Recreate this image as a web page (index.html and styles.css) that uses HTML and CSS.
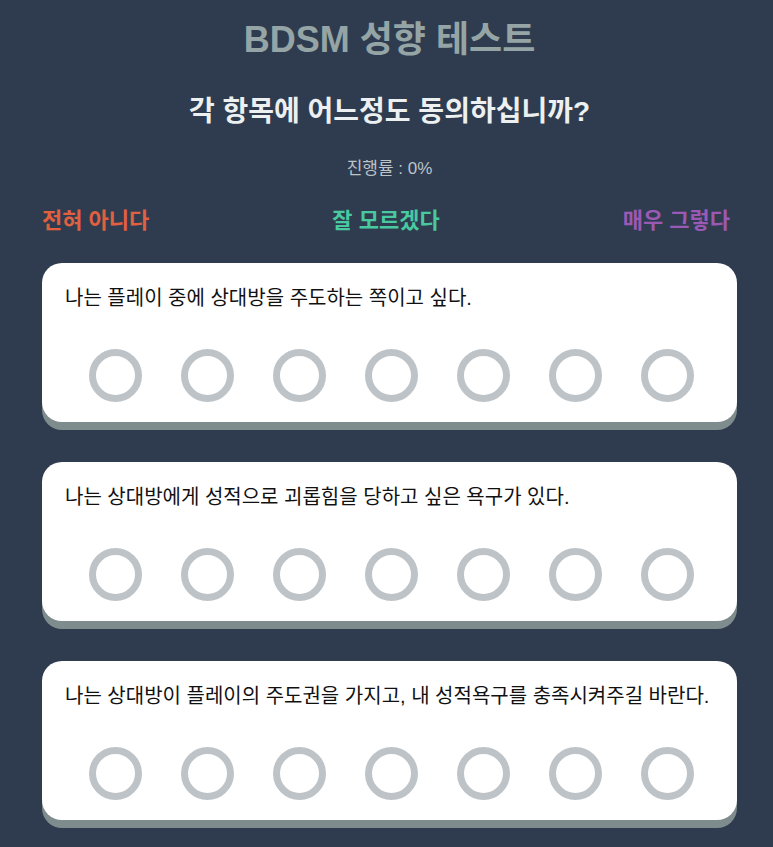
FILE: index.html
```html
<!DOCTYPE html>
<html lang="ko">
<head>
    <meta charset="UTF-8">
    <meta name="viewport" content="width=device-width, initial-scale=1.0">
    <title>BDSM 성향 테스트</title>
    <link rel="stylesheet" href="styles.css">
</head>
<body>
    <div class="container">
        <h1 class="title">BDSM 성향 테스트</h1>
        <h2 class="subtitle">각 항목에 어느정도 동의하십니까?</h2>
        <p class="progress">진행률 : 0%</p>

        <div class="scale-labels">
            <span class="label-no">전혀 아니다</span>
            <span class="label-mid">잘 모르겠다</span>
            <span class="label-yes">매우 그렇다</span>
        </div>

        <div class="question">
            <p class="question-text">나는 플레이 중에 상대방을 주도하는 쪽이고 싶다.</p>
            <div class="choices">
                <span class="choice"></span>
                <span class="choice"></span>
                <span class="choice"></span>
                <span class="choice"></span>
                <span class="choice"></span>
                <span class="choice"></span>
                <span class="choice"></span>
            </div>
        </div>

        <div class="question">
            <p class="question-text">나는 상대방에게 성적으로 괴롭힘을 당하고 싶은 욕구가 있다.</p>
            <div class="choices">
                <span class="choice"></span>
                <span class="choice"></span>
                <span class="choice"></span>
                <span class="choice"></span>
                <span class="choice"></span>
                <span class="choice"></span>
                <span class="choice"></span>
            </div>
        </div>

        <div class="question">
            <p class="question-text">나는 상대방이 플레이의 주도권을 가지고, 내 성적욕구를 충족시켜주길 바란다.</p>
            <div class="choices">
                <span class="choice"></span>
                <span class="choice"></span>
                <span class="choice"></span>
                <span class="choice"></span>
                <span class="choice"></span>
                <span class="choice"></span>
                <span class="choice"></span>
            </div>
        </div>
    </div>
</body>
</html>
```

FILE: styles.css
```css
* {
    margin: 0;
    padding: 0;
    box-sizing: border-box;
}

body {
    background: #2f3c4f;
    font-family: 'Liberation Sans', 'Noto Sans CJK KR', sans-serif;
    overflow: hidden;
}

.container {
    padding: 18px 36px 0 42px;
}

.title {
    text-align: center;
    font-size: 36px;
    line-height: 44px;
    font-weight: bold;
    color: #95a5a6;
}

.subtitle {
    margin-top: 32px;
    text-align: center;
    font-size: 28px;
    line-height: 36px;
    font-weight: bold;
    color: #ecf0f1;
}

.progress {
    margin-top: 27px;
    text-align: center;
    font-size: 17px;
    line-height: 24px;
    color: #bdc3c7;
}

/* 척도 라벨 */
.scale-labels {
    display: flex;
    justify-content: space-between;
    margin-top: 25px;
    padding-right: 7px;
    font-size: 22px;
    line-height: 30px;
    font-weight: bold;
}

.label-no {
    color: #e0603f;
}

.label-mid {
    color: #48c9a0;
}

.label-yes {
    color: #9b59b6;
}

/* 질문 카드 */
.question {
    margin-top: 27px;
    margin-bottom: 40px;
    background: #fff;
    border-radius: 20px;
    box-shadow: 0 8px 0 #7f8c8d;
    padding: 21px 23px 20px 23px;
}

.question + .question {
    margin-top: 0;
}

.question-text {
    font-size: 20px;
    line-height: 28px;
    color: #111;
}

.choices {
    display: flex;
    justify-content: space-between;
    margin-top: 37px;
    padding: 0 20px 0 24px;
}

.choice {
    width: 53px;
    height: 53px;
    border: 7px solid #bdc3c7;
    border-radius: 50%;
    cursor: pointer;
}
```
